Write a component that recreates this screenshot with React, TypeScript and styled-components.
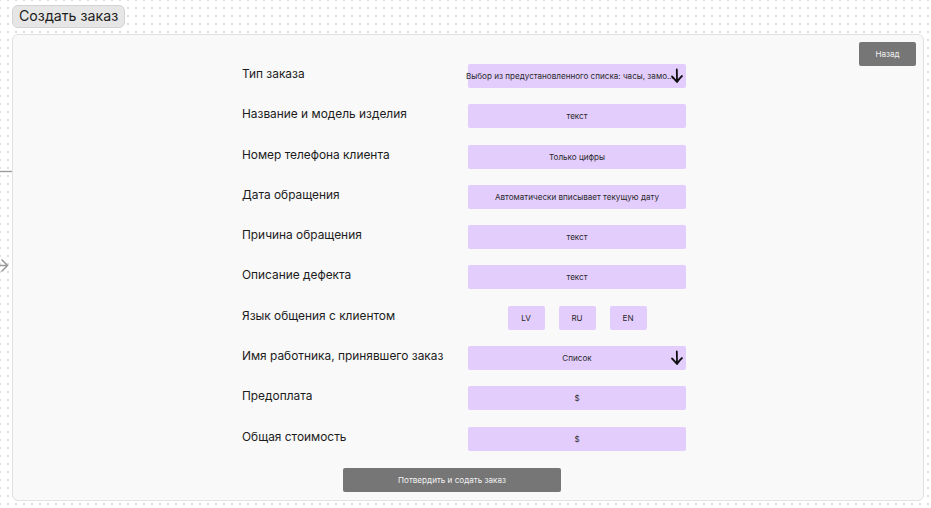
import React from "react";
import styled, { createGlobalStyle } from "styled-components";

const Global = createGlobalStyle`
  html, body { margin: 0; padding: 0; }
  body {
    width: 931px;
    height: 508px;
    overflow: hidden;
    font-family: Inter, "Noto Sans", "Liberation Sans", sans-serif;
    background-color: #ffffff;
    background-image: radial-gradient(circle, #dcdcdc 0.7px, transparent 0.9px);
    background-size: 8px 8px;
    background-position: 4px 4px;
  }
`;

const Canvas = styled.div`
  position: relative;
  display: flex;
  flex-direction: column;
  gap: 6px;
  padding: 5px 7px 0 12px;
  height: 508px;
  box-sizing: border-box;
`;

const TitleChip = styled.div`
  align-self: flex-start;
  padding: 2px 6px 3px 6px;
  background: #e6e6e6;
  border: 1px solid #d3d3d3;
  border-radius: 6px;
  font-size: 14.2px;
  color: #1e1e1e;
  line-height: 16px;
`;

const Frame = styled.div`
  display: flex;
  width: 912px;
  height: 467px;
  box-sizing: border-box;
  background: #f9f9f9;
  border: 1px solid #e2e2e2;
  border-radius: 6px;
`;

const Main = styled.div`
  flex: 1;
  display: flex;
  flex-direction: column;
  padding: 29px 0 0 229px;
`;

const Aside = styled.div`
  padding: 7px 7px 0 0;
`;

const FormGrid = styled.div`
  display: grid;
  grid-template-columns: 226px 218px;
  grid-auto-rows: 24px;
  row-gap: 16.3px;
  align-items: center;
`;

const Label = styled.div`
  font-size: 11.9px;
  color: #1c1c1c;
  padding-bottom: 5px;
  white-space: nowrap;
`;

const Field = styled.div`
  position: relative;
  height: 24px;
  background: #e3cdfd;
  border-radius: 2px;
  display: flex;
  align-items: center;
  justify-content: center;
  font-size: 8.1px;
  color: #2a2a2a;
  white-space: nowrap;
  overflow: visible;
`;

const FieldText = styled.span<{ $shift?: number }>`
  margin-right: ${(p) => p.$shift ?? 0}px;
`;

const ArrowWrap = styled.span`
  position: absolute;
  right: 2px;
  top: 4px;
  display: flex;
`;

const LangRow = styled.div`
  display: flex;
  justify-content: center;
  gap: 14px;
`;

const LangButton = styled.div`
  width: 37px;
  height: 24px;
  background: #e3cdfd;
  border-radius: 2px;
  display: flex;
  align-items: center;
  justify-content: center;
  font-size: 8.1px;
  color: #2a2a2a;
`;

const GrayButton = styled.div<{ $w: number }>`
  width: ${(p) => p.$w}px;
  height: 24px;
  background: #767676;
  border-radius: 2px;
  display: flex;
  align-items: center;
  justify-content: center;
  font-size: 8.1px;
  color: #f2f2f2;
`;

const SubmitRow = styled.div`
  margin: 17px 0 0 101px;
`;

const Connector = styled.svg`
  position: absolute;
  left: 0;
  top: 0;
  pointer-events: none;
`;

const DownArrow = () => (
  <svg width="14" height="16" viewBox="0 0 14 16">
    <path
      d="M6.8 1.5 C6.9 5 7 9 7 13.5 M2 8.5 C4 10.5 5.6 12.3 7 14 C8.4 11.8 10 9.8 12 8"
      fill="none"
      stroke="#111"
      strokeWidth="1.8"
      strokeLinecap="round"
      strokeLinejoin="round"
    />
  </svg>
);

const rows: { label: string; text?: string; arrow?: boolean; lang?: boolean; shift?: number }[] = [
  { label: "Тип заказа", text: "Выбор из предустановленного списка: часы, замо...", arrow: true, shift: 14 },
  { label: "Название и модель изделия", text: "текст" },
  { label: "Номер телефона клиента", text: "Только цифры" },
  { label: "Дата обращения", text: "Автоматически вписывает текущую дату" },
  { label: "Причина обращения", text: "текст" },
  { label: "Описание дефекта", text: "текст" },
  { label: "Язык общения с клиентом", lang: true },
  { label: "Имя работника, принявшего заказ", text: "Список", arrow: true },
  { label: "Предоплата", text: "$" },
  { label: "Общая стоимость", text: "$" },
];

export default function App() {
  return (
    <>
      <Global />
      <Canvas>
        <Connector width="14" height="508">
          <line x1="0" y1="171.5" x2="12" y2="171.5" stroke="#9c9c9c" strokeWidth="1.4" />
          <path d="M1.5 259.5 L7.5 265.5 L1.5 271.5 M0 265.5 L7.5 265.5" fill="none" stroke="#9a9a9a" strokeWidth="1.5" />
        </Connector>
        <TitleChip>Создать заказ</TitleChip>
        <Frame>
          <Main>
            <FormGrid>
              {rows.map((r) => (
                <React.Fragment key={r.label}>
                  <Label>{r.label}</Label>
                  {r.lang ? (
                    <LangRow>
                      <LangButton>LV</LangButton>
                      <LangButton>RU</LangButton>
                      <LangButton>EN</LangButton>
                    </LangRow>
                  ) : (
                    <Field>
                      <FieldText $shift={r.shift}>{r.text}</FieldText>
                      {r.arrow && (
                        <ArrowWrap>
                          <DownArrow />
                        </ArrowWrap>
                      )}
                    </Field>
                  )}
                </React.Fragment>
              ))}
            </FormGrid>
            <SubmitRow>
              <GrayButton $w={218}>Потвердить и содать заказ</GrayButton>
            </SubmitRow>
          </Main>
          <Aside>
            <GrayButton $w={57}>Назад</GrayButton>
          </Aside>
        </Frame>
      </Canvas>
    </>
  );
}
